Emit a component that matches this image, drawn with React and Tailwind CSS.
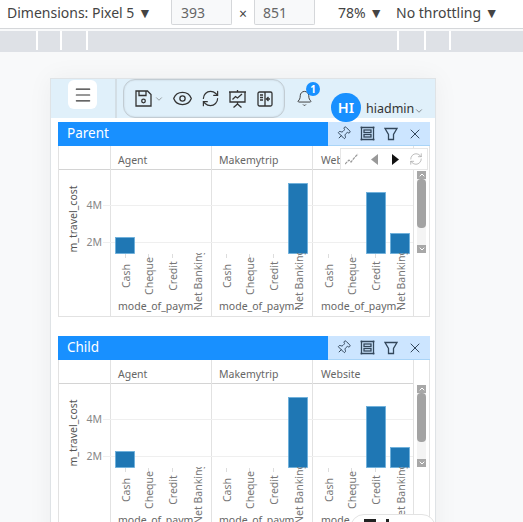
import { Bell, ChevronDown, Eye, Menu, Pin, RefreshCw, X } from 'lucide-react'

/* ── Chart data ── */
const FACETS = [
  { name: 'Agent', x: 0, bars: [{ i: 0, top: 91 }] },
  { name: 'Makemytrip', x: 101, bars: [{ i: 3, top: 37 }] },
  { name: 'Website', x: 203, bars: [{ i: 2, top: 46 }, { i: 3, top: 87 }] },
]
const MODES = ['Cash', 'Cheque', 'Credit', 'Net Banking']
const TICK_X = [68, 91, 115, 140]
const BAR_X = [57, 81, 105, 129]

function SaveIcon() {
  return (
    <svg width="17" height="17" viewBox="0 0 17 17" fill="none" stroke="#333" strokeWidth="1.3">
      <path d="M1 1h11.500L16 4.500V16H1z" />
      <path d="M4 1v4.500h7V1" />
      <circle cx="8.500" cy="11" r="1.800" />
    </svg>
  )
}

function PresentIcon() {
  return (
    <svg width="19" height="18" viewBox="0 0 19 18" fill="none" stroke="#333" strokeWidth="1.3">
      <path d="M1 2h17M2 2v10h15V2M9.500 12v2M9.500 14l-4 3.500M9.500 14l4 3.500M9.500 0v2" />
      <path d="M4.500 9.500l3-3 2 1.500 4.500-4" />
    </svg>
  )
}

function SplitIcon() {
  return (
    <svg width="16" height="16" viewBox="0 0 16 16" fill="none" stroke="#333" strokeWidth="1.3">
      <rect x="1" y="1" width="14" height="14" rx="1.500" />
      <path d="M8 1v14M3 4h3M3 6.500h3M3 9h3M13 8h-3M11.500 6l-2 2 2 2" />
    </svg>
  )
}

function BoxIcon() {
  return (
    <svg width="15" height="15" viewBox="0 0 15 15" fill="none" stroke="#33475b" strokeWidth="1.300">
      <path d="M1.500 0.500v14M13.500 0.500v14M0.500 1.500h14M0.500 13.500h14" />
      <rect x="4" y="4" width="7" height="2.500" />
      <rect x="4" y="8.500" width="7" height="2.500" />
    </svg>
  )
}

function FunnelIcon() {
  return (
    <svg width="14" height="14" viewBox="0 0 14 14" fill="none" stroke="#33475b" strokeWidth="1.300">
      <path d="M1 1.500h12L9.500 7.500v5h-5v-5z" />
    </svg>
  )
}

function Scrollbar() {
  return (
    <div className="w-[16px] shrink-0 border-r border-[#e2e2e2] pt-[25px] pl-[3px]">
      <div className="flex h-[82px] w-[9px] flex-col bg-[#f4f4f4]">
        <div className="flex h-[8px] items-center justify-center bg-[#a8a8a8]">
          <ChevronDown size={8} strokeWidth={3} className="rotate-180 text-white" />
        </div>
        <div className="h-[49px] rounded-[4px] bg-[#a3a3a3]" />
        <div className="flex-1" />
        <div className="flex h-[8px] items-center justify-center bg-[#a8a8a8]">
          <ChevronDown size={8} strokeWidth={3} className="text-white" />
        </div>
      </div>
    </div>
  )
}

function FacetChart({ id }) {
  return (
    <svg width="356" height="170" className="shrink-0" style={{ fontFamily: '"Noto Sans", sans-serif' }}>
      <defs>
        <clipPath id={id}>
          <rect x="0" y="107" width="356" height="70" />
        </clipPath>
      </defs>
      <line x1="0" y1="23.500" x2="356" y2="23.500" stroke="#d4d4d4" />
      {[0, 52, 153, 254, 355].map((x) => (
        <line key={x} x1={x + 0.5} y1="0" x2={x + 0.5} y2="170" stroke="#e2e2e2" />
      ))}
      <line x1="45" y1="59.500" x2="355" y2="59.500" stroke="#efefef" />
      <line x1="45" y1="96.500" x2="355" y2="96.500" stroke="#efefef" />
      <text x="44" y="63" textAnchor="end" fontSize="10.500" fill="#888">4M</text>
      <text x="44" y="100" textAnchor="end" fontSize="10.500" fill="#888">2M</text>
      <text transform="translate(19 73) rotate(-90)" textAnchor="middle" fontSize="10.500" fill="#555">m_travel_cost</text>

      {FACETS.map((f) => (
        <g key={f.name} transform={`translate(${f.x} 0)`}>
          <text x="60" y="18" fontSize="10.500" fill="#666">{f.name}</text>
          {f.bars.map((b) => (
            <rect key={b.i} x={BAR_X[b.i] + 0.5} y={b.top + 0.5} width="19" height={107 - b.top} fill="#1f77b4" stroke="#6aaedb" strokeWidth="0.800" />
          ))}
          <g clipPath={`url(#${id})`}>
            {MODES.map((m, i) => (
              <g key={m}>
                <line x1={TICK_X[i] - 0.5} y1="108" x2={TICK_X[i] - 0.5} y2="112" stroke="#ddd" />
                <text
                  transform={`translate(${TICK_X[i] + 4} ${i === 3 ? 164 : 130}) rotate(-90)`}
                  textAnchor={i === 3 ? 'start' : 'middle'}
                  fontSize="10.500"
                  fill="#777"
                >
                  {m}
                </text>
              </g>
            ))}
          </g>
          <text x="60" y="164" fontSize="10.500" fill="#666">mode_of_paym..</text>
        </g>
      ))}
    </svg>
  )
}

function Panel({ title, id, children }) {
  return (
    <section className="relative">
      <div className="flex h-[24px]">
        <div className="flex w-[270px] items-center bg-[#1890ff] pb-[2px] pl-[9px] text-[13.500px] text-white">{title}</div>
        <div className="flex flex-1 items-center gap-[9px] border-b border-[#a9d4f7] bg-[#cce5ff] pl-[8px] text-[#33475b]">
          <Pin size={15} strokeWidth={1.500} className="rotate-45" />
          <BoxIcon />
          <FunnelIcon />
          <X size={16} strokeWidth={1.500} />
        </div>
      </div>
      <div className="flex h-[171px] border-b border-[#e2e2e2]">
        <FacetChart id={id} />
        <Scrollbar />
      </div>
      {children}
    </section>
  )
}

export default function App() {
  return (
    <div className="relative h-[522px] w-[523px] overflow-hidden bg-[#f8f9fa]" style={{ fontFamily: '"Noto Sans", sans-serif' }}>
      {/* Devtools device bar */}
      <div className="flex h-[29px] items-start border-b border-[#d5d7da] bg-white text-[14px] text-[#444]">
        <span className="mt-[2px] ml-[7px] w-[164px]">Dimensions: Pixel 5 ▼</span>
        <div className="h-[25px] w-[61px] rounded-b-[2px] border border-t-0 border-[#d5d7da] bg-[#f8f9fa] pt-[2px] pl-[9px] text-[#666]">393</div>
        <span className="mt-[3px] w-[22px] text-center">×</span>
        <div className="h-[25px] w-[61px] rounded-b-[2px] border border-t-0 border-[#d5d7da] bg-[#f8f9fa] pt-[2px] pl-[8px] text-[#666]">851</div>
        <span className="mt-[2px] ml-[23px] w-[58px]">78% ▼</span>
        <span className="mt-[2px]">No throttling ▼</span>
      </div>
      {/* Ruler */}
      <div className="mt-[2px] flex h-[21px] bg-[#dee1e6]">
        <div className="ml-[36px] h-[19px] w-[2px] bg-white" />
        <div className="ml-[22px] h-[19px] w-[2px] bg-white" />
        <div className="ml-[24px] h-[19px] w-[2px] bg-white" />
        <div className="ml-[309px] h-[19px] w-[2px] bg-white" />
        <div className="ml-[25px] h-[19px] w-[2px] bg-white" />
        <div className="ml-[23px] h-[19px] w-[2px] bg-white" />
      </div>

      {/* Device frame */}
      <div className="mt-[26px] ml-[50px] h-[470px] w-[386px] border-x border-t border-[#dfe3e6] bg-white shadow-[0_0_24px_rgba(0,0,0,0.05)]">
        <header className="flex h-[39px] bg-[#e0f0fa]">
          <div className="w-[66px] shrink-0 border-r-2 border-[#d3dee5] pt-[1px] pl-[17px]">
            <div className="flex h-[29px] w-[29px] items-center justify-center rounded-[6px] bg-white text-[#333]">
              <Menu size={20} strokeWidth={1.400} />
            </div>
          </div>
          <div className="ml-[6px] flex h-[39px] w-[162px] shrink-0 items-center rounded-[12px] border border-[#c2ccd3] pl-[11px] text-[#333] shadow-[inset_0_0_2px_rgba(0,0,0,0.15)]">
            <SaveIcon />
            <ChevronDown size={10} strokeWidth={1.300} className="ml-[2px] text-[#555]" />
            <Eye size={21} strokeWidth={1.500} className="ml-[8px]" />
            <RefreshCw size={19} strokeWidth={1.500} className="ml-[8px]" />
            <span className="ml-[8px]"><PresentIcon /></span>
            <span className="ml-[10px]"><SplitIcon /></span>
          </div>
          <div className="relative mt-[11px] ml-[11px] h-[18px] w-[16px] shrink-0 text-[#333]">
            <Bell size={17} strokeWidth={1.300} />
            <span className="absolute -top-[8px] left-[10px] flex h-[14px] w-[14px] items-center justify-center rounded-full bg-[#1890ff] text-[10px] leading-none font-bold text-white">1</span>
          </div>
          <div className="relative z-10 mt-[14px] ml-[19px] flex h-[29px] w-[30px] shrink-0 items-center justify-center rounded-full bg-[#1890ff] text-[14.500px] font-semibold text-white">HI</div>
          <span className="mt-[20px] ml-[5px] text-[12.500px] leading-[20px] text-[#333]">hiadmin</span>
          <ChevronDown size={10} strokeWidth={1.300} className="mt-[27px] text-[#333]" />
        </header>

        <div className="mt-[4px] flex flex-col gap-[19px] pr-[5px] pl-[7px]">
          <Panel title="Parent" id="parent-clip">
            <div className="absolute top-[26px] left-[282px] flex h-[22px] w-[88px] items-center gap-[9px] border border-[#e6e6e6] bg-white pl-[4px]">
              <svg width="14" height="12" viewBox="0 0 14 12" fill="none" stroke="#999" strokeWidth="1.200">
                <path d="M0 11l4-4 2 2 4-5 3-3" strokeDasharray="3 0.800" />
              </svg>
              <svg width="8" height="11" viewBox="0 0 8 11" className="ml-[3px]"><path d="M7 0v11L0 5.500z" fill="#999" /></svg>
              <svg width="8" height="11" viewBox="0 0 8 11" className="ml-[3px]"><path d="M1 0v11l7-5.500z" fill="#111" /></svg>
              <RefreshCw size={14} strokeWidth={1.100} className="ml-[1px] text-[#999]" />
            </div>
          </Panel>
          <Panel title="Child" id="child-clip" />
        </div>
      </div>

      {/* Floating pill cut off by the window */}
      <div className="absolute top-[514px] left-[350px] flex h-[40px] w-[86px] gap-[10px] rounded-t-[14px] border border-[#e3e3e3] bg-white pt-[4px] pl-[13px]">
        <div className="h-[3px] w-[12px] bg-[#222]" />
        <div className="h-[3px] w-[3px] bg-[#222]" />
      </div>
    </div>
  )
}
